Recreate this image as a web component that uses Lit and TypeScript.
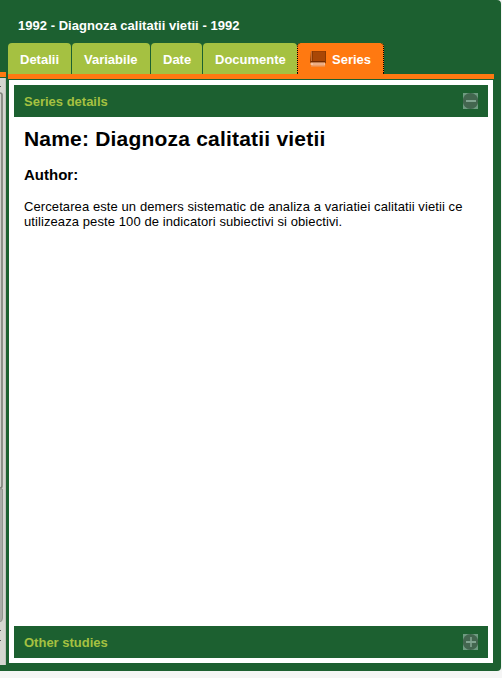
import { LitElement, html, svg, css } from "lit";
import { customElement } from "lit/decorators.js";
import { styleMap } from "lit/directives/style-map.js";

const TABS = [
  { label: "Detalii", width: 63 },
  { label: "Variabile", width: 78 },
  { label: "Date", width: 51 },
  { label: "Documente", width: 94 },
];

@customElement("app-root")
export class AppRoot extends LitElement {
  static styles = css`
    :host { display: block; height: 678px; overflow: hidden; background: #f5f5f5; font-family: "Liberation Sans", Arial, sans-serif; font-size: 13px; line-height: 15px; color: #000; }
    .frame { box-sizing: border-box; width: 501px; height: 671px; background: #1c6030; border-radius: 0 4px 4px 0; display: flex; gap: 2px; }
    .side { width: 6px; height: 665px; display: flex; flex-direction: column; flex: none; }
    .edge { height: 5px; margin-top: 72px; background: #ff7911; flex: none; }
    .scroll { margin-top: 1px; flex: 1; display: block; min-height: 0; }
    .main { width: 486px; display: flex; flex-direction: column; }
    .title { height: 43px; box-sizing: border-box; padding: 18px 10px 0; color: #fff; font-weight: bold; letter-spacing: 0.027px; }
    .tabs { height: 31px; display: flex; gap: 1px; }
    .tab { flex: none; box-sizing: border-box; height: 31px; padding: 9px 0 0 12px; border-radius: 4px 4px 0 0; background: #a5c141; color: #fff; font-weight: bold; white-space: nowrap; }
    .active { width: 87px; background: #ff7911; border: 0 dotted #000; border-width: 0 1px; margin-left: -1px; display: flex; gap: 6px; }
    .book { margin-top: -1px; width: 16px; height: 16px; flex: none; }
    .bar { height: 5px; background: #ff7911; }
    .body { margin: 1px 1px 0; height: 583px; box-sizing: border-box; padding: 5px; background: #fff; display: flex; flex-direction: column; }
    .head { height: 32px; flex: none; box-sizing: border-box; padding: 0 10px; background: #1c6030; color: #a5c141; font-weight: bold; display: flex; align-items: center; justify-content: space-between; }
    .toggle { width: 15px; height: 16px; display: block; }
    .content { flex: 1; padding: 9px 10px 0; }
    h1 { margin: 0; font-size: 21px; line-height: 25px; letter-spacing: 0.2px; }
    h2 { margin: 15px 0 0; font-size: 15px; line-height: 18px; }
    p { margin: 15px 0 0; letter-spacing: 0.09px; }
  `;

  private toggle(plus: boolean) {
    return html`<svg class="toggle" viewBox="0 0 15 16">
      <rect width="15" height="16" fill="#6e9b80" />
      <ellipse cx="7.5" cy="8" rx="7.7" ry="8" fill="#43664f" />
      <path d="M3 8H13" stroke="#80a38f" stroke-width="2" />
      ${plus ? svg`<path d="M8 3V13" stroke="#80a38f" stroke-width="1.6" />` : ""}
    </svg>`;
  }

  render() {
    return html`<div class="frame">
      <div class="side">
        <div class="edge"></div>
        <svg class="scroll" width="6" height="587" viewBox="0 0 6 587">
          <rect width="6" height="587" fill="#d4d6d0" />
          <rect x="5" width="1" height="587" fill="#bfc2bb" />
          <rect x="-8" y="15" width="10" height="395" rx="2" fill="#d0d2cd" stroke="#80837c" stroke-width="1.7" />
          <path d="M-1 411H2.5V540Q2.5 544 -1 544Z" fill="#aaaca7" stroke="#92958e" />
          <path d="M0 8.5H1M0 552.5H1M0 562.5H1" stroke="#555" />
        </svg>
      </div>
      <div class="main">
        <div class="title">1992 - Diagnoza calitatii vietii - 1992</div>
        <div class="tabs">
          ${TABS.map((t) => html`<div class="tab" style=${styleMap({ width: `${t.width}px` })}>${t.label}</div>`)}
          <div class="tab active">
            <svg class="book" viewBox="0 0 16 16">
              <path d="M1 0H16V12L14 13H1L0 11Z" fill="#8b3900" />
              <path d="M3 .5H15V10H3Z" fill="#a94706" />
              <path d="M1.5 0V11" stroke="#c56b31" />
              <path d="M1 10.5H15" stroke="#742a00" />
              <path d="M1 11.5H15V14.5H2Q0 14 .5 12Z" fill="#f8c19b" />
              <path d="M3 13H14" stroke="#dc9062" stroke-width=".8" />
              <path d="M1 15H15" stroke="#e3a077" />
            </svg><span>Series</span>
          </div>
        </div>
        <div class="bar"></div>
        <div class="body">
          <div class="head">Series details ${this.toggle(false)}</div>
          <div class="content">
            <h1>Name: Diagnoza calitatii vietii</h1>
            <h2>Author:</h2>
            <p>Cercetarea este un demers sistematic de analiza a variatiei calitatii vietii ce utilizeaza peste 100 de indicatori subiectivi si obiectivi.</p>
          </div>
          <div class="head">Other studies ${this.toggle(true)}</div>
        </div>
      </div>
    </div>`;
  }
}
